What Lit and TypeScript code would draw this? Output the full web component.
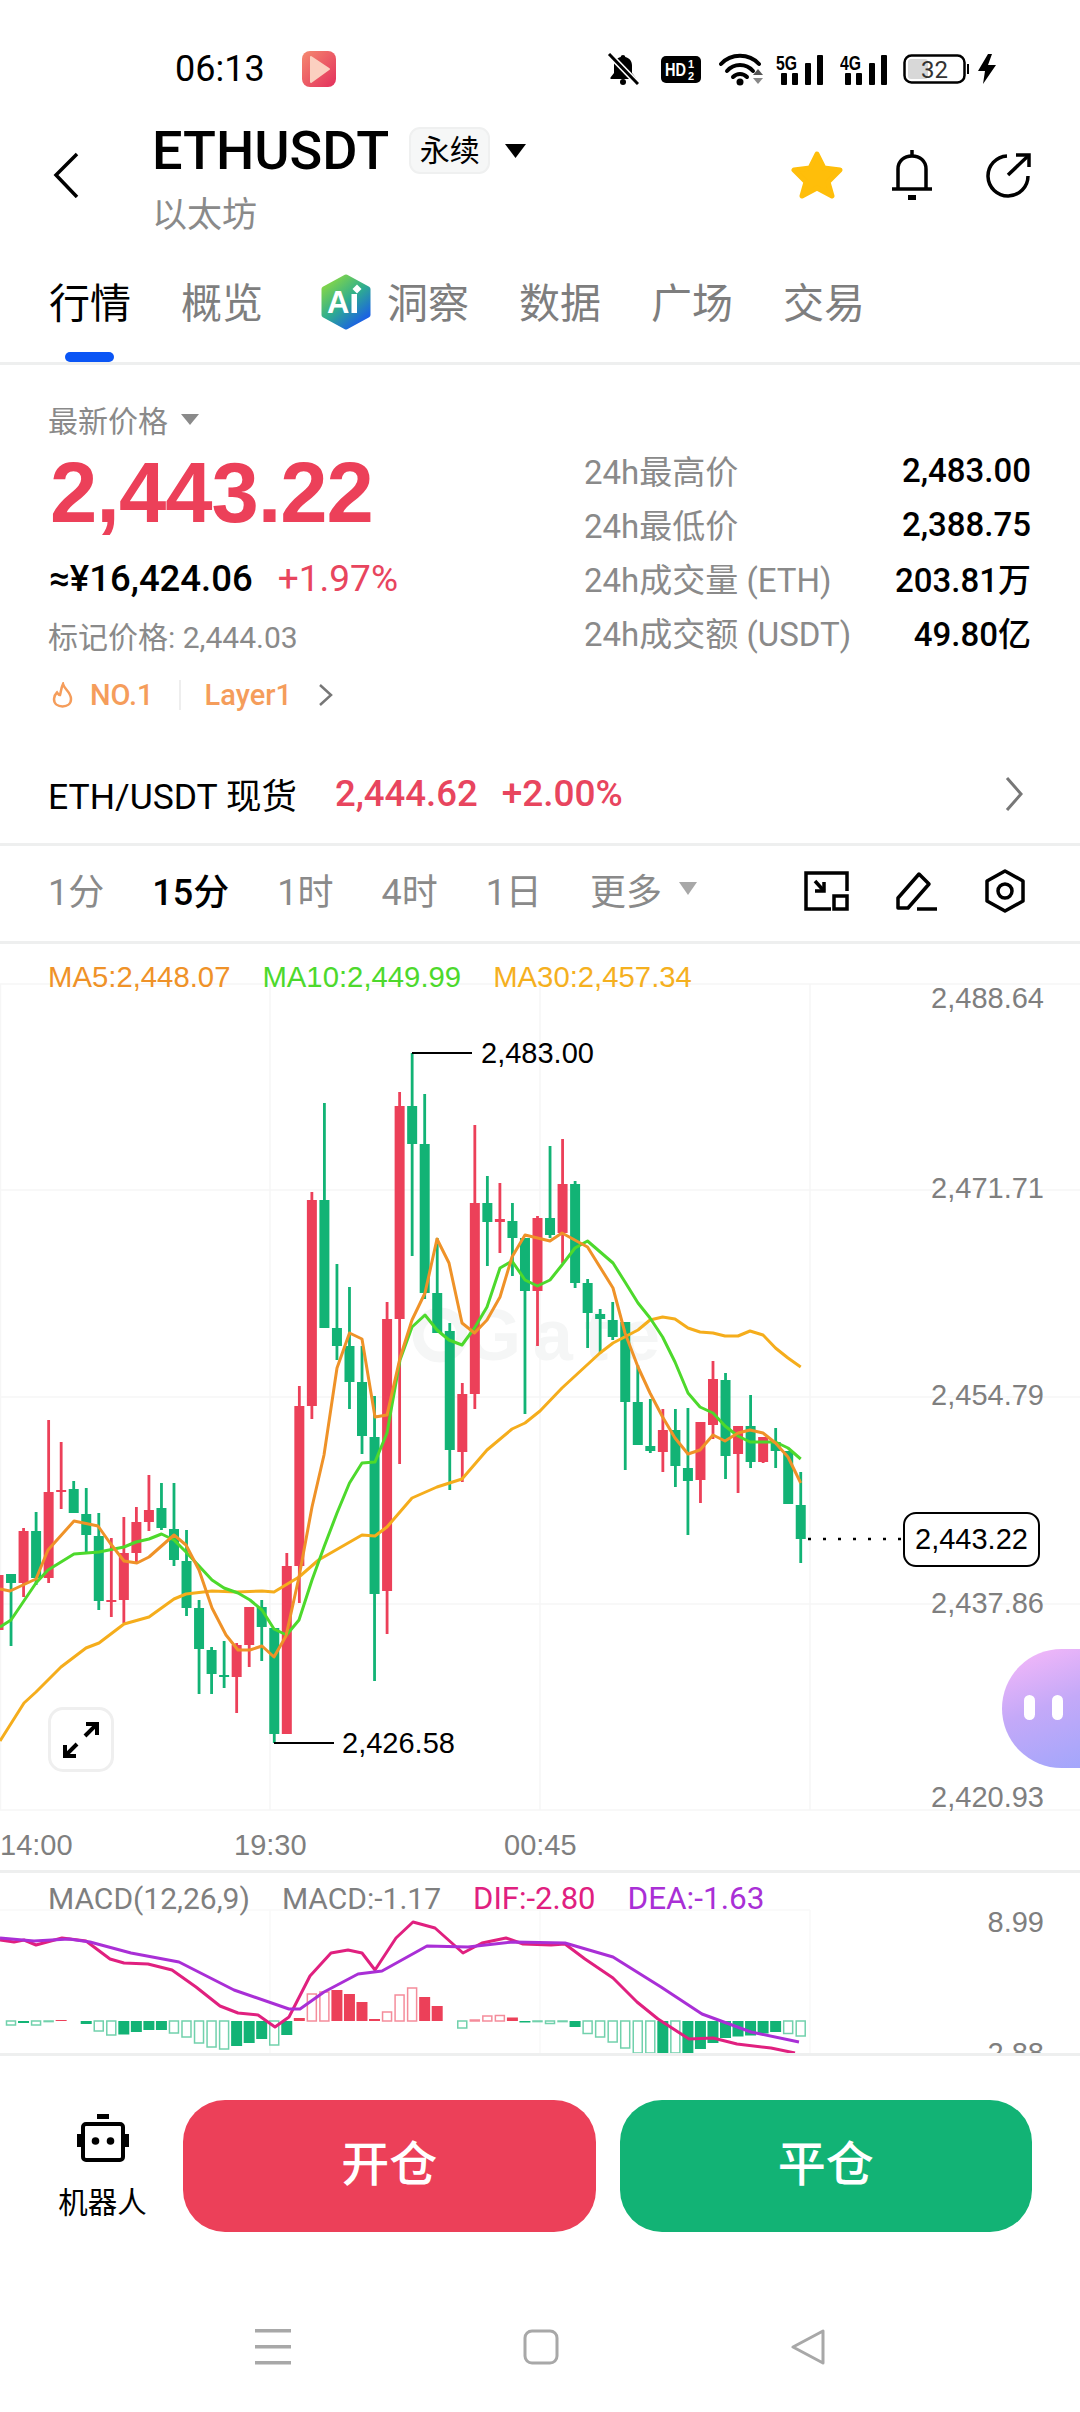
import { LitElement, html, svg, css } from 'lit';
import { customElement } from 'lit/decorators.js';

type Candle = [number, number, number, number, 'r' | 'g'];

const RED = '#ec4059';
const GREEN = '#12b375';

// wick top, body top, body bottom, wick bottom (page y), first candle sits just off the left edge
const candles: Candle[] = [
  [1575, 1575, 1630, 1640, 'r'], [1574, 1574, 1583, 1646, 'g'], [1528, 1531, 1583, 1597, 'r'], [1512, 1531, 1578, 1585, 'g'],
  [1420, 1492, 1578, 1583, 'r'], [1442, 1490, 1492, 1509, 'r'], [1481, 1489, 1513, 1513, 'g'], [1488, 1514, 1535, 1553, 'g'],
  [1513, 1536, 1601, 1610, 'g'], [1538, 1600, 1602, 1617, 'r'], [1517, 1553, 1600, 1623, 'r'], [1507, 1522, 1553, 1562, 'r'],
  [1475, 1510, 1522, 1531, 'r'], [1483, 1508, 1528, 1530, 'g'], [1483, 1529, 1560, 1566, 'g'], [1530, 1561, 1608, 1616, 'g'],
  [1600, 1608, 1649, 1694, 'g'], [1647, 1650, 1674, 1694, 'g'], [1641, 1675, 1677, 1688, 'g'], [1643, 1645, 1677, 1713, 'r'],
  [1607, 1607, 1645, 1667, 'r'], [1600, 1607, 1627, 1661, 'g'], [1628, 1628, 1734, 1743, 'g'], [1553, 1566, 1734, 1734, 'r'],
  [1386, 1406, 1566, 1603, 'r'], [1192, 1200, 1406, 1419, 'r'], [1103, 1200, 1328, 1328, 'g'], [1264, 1328, 1346, 1360, 'g'],
  [1287, 1346, 1382, 1409, 'g'], [1346, 1382, 1436, 1454, 'g'], [1396, 1437, 1594, 1681, 'g'], [1302, 1319, 1591, 1634, 'r'],
  [1092, 1106, 1319, 1464, 'r'], [1053, 1106, 1144, 1256, 'g'], [1094, 1144, 1293, 1299, 'g'], [1238, 1293, 1333, 1333, 'g'],
  [1323, 1331, 1450, 1490, 'g'], [1383, 1394, 1452, 1482, 'r'], [1125, 1203, 1394, 1409, 'r'], [1176, 1203, 1222, 1266, 'g'],
  [1183, 1219, 1222, 1253, 'r'], [1203, 1221, 1238, 1276, 'g'], [1238, 1238, 1291, 1414, 'g'], [1216, 1218, 1291, 1346, 'r'],
  [1146, 1218, 1235, 1238, 'g'], [1139, 1184, 1233, 1263, 'r'], [1181, 1184, 1283, 1288, 'g'], [1279, 1283, 1313, 1348, 'g'],
  [1309, 1314, 1319, 1353, 'g'], [1302, 1320, 1337, 1340, 'g'], [1322, 1322, 1402, 1470, 'g'], [1365, 1402, 1445, 1445, 'g'],
  [1399, 1446, 1451, 1453, 'g'], [1409, 1430, 1452, 1472, 'r'], [1409, 1430, 1466, 1487, 'g'], [1408, 1468, 1481, 1535, 'g'],
  [1422, 1422, 1480, 1503, 'r'], [1361, 1379, 1425, 1439, 'r'], [1373, 1380, 1456, 1479, 'g'], [1426, 1426, 1454, 1493, 'r'],
  [1395, 1426, 1462, 1468, 'g'], [1437, 1437, 1462, 1463, 'r'], [1428, 1442, 1451, 1468, 'g'], [1451, 1451, 1504, 1504, 'g'],
  [1472, 1505, 1539, 1563, 'g'],
];
const candleX = (i: number) => -1.5 + i * 12.535;

const ma5 = '0,1589 10,1591 36,1579 48,1550 74,1521 98,1526 110,1543 124,1561 137,1563 149,1557 174,1535 186,1545 199,1570 212,1608 226,1635 238,1650 250,1650 262,1646 274,1657 286,1636 299,1577 312,1507 324,1455 337,1368 349.5,1333 362,1339 375,1417 387,1415 400,1358 412,1320 425,1293 437,1239 449,1263 462,1323 474.5,1333 487,1320 500,1297 512,1257 525,1235 537.5,1238 550,1241 562,1233 587.5,1247 613,1288 625,1333 638,1367 650,1393 662.6,1417 675,1438 688,1454 700,1450 713,1435 725,1441 738,1433 750,1430 763,1433 775.5,1443 788,1457 800.7,1483';
const ma10 = '0,1627 11,1620 36,1583 48,1570 74,1554 99,1552 124,1547 136,1542 149,1539 161.5,1534 174,1540 186,1552 199,1566 212,1580 224,1588 238,1593 250,1600 262,1610 274,1629 286.5,1635 299,1620 312,1580 324,1547 337,1513 349.5,1483 362,1463 375,1462 387,1433 400,1360 412,1327 425,1315 437,1330 449,1340 462,1345 474.5,1328 487,1307 500,1268 512,1261 525,1280 537.5,1286 550,1280 562,1265 575,1248 587.5,1241 613,1263 625,1282 638,1303 650,1318 662.6,1337 675,1362 688,1393 700,1407 713,1413 725,1426 738,1436 750,1442 763,1442 775.5,1442 788,1448 800.7,1459';
const ma30 = '0,1741 24,1703 36,1692 61,1667 86,1648 99,1643 124,1624 149,1617 174,1599 186,1594 212,1591 237,1592 262,1591 274,1592 299,1577 318.5,1560 362,1535 375,1536 387,1527 412,1498 437,1487 462,1479 487,1450 512,1429 525,1423 540,1411 562,1388 600,1353 613,1343 638,1330 650,1320 662.6,1317 675,1319 688,1328 700,1332 713,1333 725,1336 738,1336 750,1331 763,1335 775.5,1348 788,1358 800.7,1367';

// panel-local y is measured from the top of the macd panel (page y 1873)
const dif = '0,-1 14,1 24,-1 36,4 62,-3 86,0 110,18 124,22 148,23 172,29 196,46 220,65 238,72 258,74 275,86 289,76 310,35 331,12 348,9 362,12 375,29 396,-3 413,-19 435,-13 463,12 482,2 506,-3 523,3 551,4 565,3 585,18 613,37 637,61 658,78 689,98 713,97 737,103 771,107 795,112';
const dea = '0,-3 34,0 69,-2 90,1 131,12 179,21 234,49 289,68 300,68 324,51 358,33 382,30 427,5 468,6 513,1 565,2 613,16 661,46 702,73 751,91 799,101';
// histogram: signed height in px, last flag marks hollow bars
const bars: [number, boolean][] = [
  [4, true], [2, false], [4, true], [0.6, true], [-1, false], [0, false], [3, false], [10, true], [14, true], [13.5, false],
  [11, false], [9, false], [9, false], [12, true], [16, true], [22, true], [26, true], [28, true], [25, false], [22, false],
  [18, false], [24, true], [14, false], [-3, false], [-27, true], [-29, true], [-31, false], [-27, false], [-19, false], [-2, false],
  [-9, true], [-26, true], [-33, true], [-24, false], [-15, false], [0, false], [7, true], [-1, true], [-5, true], [-5.500, true],
  [-3.500, false], [1.500, false], [0.600, true], [2.500, true], [0.600, true], [6, false], [12.500, true], [16, true], [21, true], [27, true],
  [32, true], [32, true], [32, false], [32, true], [32, false], [28, false], [22, false], [17, false], [15.500, false], [14.500, false],
  [12.500, false], [11, false], [12.500, true], [15, true],
];
const barX = (i: number) => 11 + i * 12.535;

const tabs = ['概览', '洞察', '数据', '广场', '交易'];
const stats = [
  ['24h最高价', '2,483.00'],
  ['24h最低价', '2,388.75'],
  ['24h成交量 (ETH)', '203.81万'],
  ['24h成交额 (USDT)', '49.80亿'],
];
const periods = ['1分', '15分', '1时', '4时', '1日'];
const yLabels: [string, number][] = [['2,488.64', 1008], ['2,471.71', 1198], ['2,454.79', 1405], ['2,437.86', 1613], ['2,420.93', 1807]];

const signal = (label: string) => html`
  <svg width="48" height="32" viewBox="0 0 48 32">
    <text class="net" x="0" y="17" textLength="21" lengthAdjust="spacingAndGlyphs">${label}</text>
    <rect x="5" y="20" width="6" height="12" rx="1"/>
    <rect x="16" y="20" width="6" height="12" rx="1"/>
    <rect x="29" y="10" width="6" height="22" rx="1"/>
    <rect x="41" y="2" width="6" height="30" rx="1"/>
  </svg>`;

@customElement('app-root')
export class AppRoot extends LitElement {
  static styles = css`
    :host {
      background: #fff;
      color: #000;
      display: block;
      font-family: Roboto, "Noto Sans CJK SC", sans-serif;
      height: 2412px;
      overflow: hidden;
      width: 1080px;
    }

    .status { align-items: center; display: flex; height: 38px; padding: 50px 83px 39px 175px; }
    .time { font-size: 36px; line-height: 38px; }
    .app-badge { margin-left: 37px; }
    .status-icons { align-items: center; display: flex; margin-left: auto; }
    .status-icons svg { display: block; }
    .net { font: bold 20px "Liberation Sans", sans-serif; }

    .header { display: flex; height: 125px; }
    .back { margin: 25px 0 0 53px; }
    .title-block { margin-left: 73px; }
    .title-row { align-items: center; display: flex; height: 47px; }
    .symbol { font-size: 54px; font-weight: 500; line-height: 47px; }
    .tag {
      background: #f6f7f7;
      border: 2px solid #eff0f0;
      border-radius: 11px;
      box-sizing: border-box;
      font-size: 30px;
      height: 47px;
      line-height: 43px;
      margin-left: 20px;
      text-align: center;
      width: 81px;
    }
    .tag-arrow { margin-left: 15px; }
    .name { color: #8a8a8a; font-size: 35px; line-height: 42px; margin-top: 21px; }
    .actions { align-items: center; display: flex; height: 96px; margin-left: auto; padding: 0 49px 0 0; }
    .actions svg { display: block; }
    .star { margin-right: 48px; }
    .bell { margin-right: 53px; }

    .tabs {
      border-bottom: 3px solid #eeefef;
      display: flex;
      gap: 50px;
      height: 110px;
      padding-left: 49px;
      position: relative;
    }
    .tab { color: #7e7e7e; font-size: 41px; line-height: 104px; position: relative; }
    .tab.on { color: #000; }
    .tab.on::after {
      background: #0a55f5;
      border-radius: 5px;
      bottom: 0;
      content: "";
      height: 10px;
      left: 16px;
      position: absolute;
      width: 49px;
    }
    .tab-ai { align-items: center; display: flex; gap: 16px; height: 104px; margin-left: 8px; }
    .ai-logo { margin-top: -5px; }

    .price { display: flex; height: 379px; }
    .price-left { box-sizing: border-box; padding: 34px 0 0 48px; width: 584px; }
    .last-label { align-items: center; color: #8a8a8a; display: flex; font-size: 30px; gap: 13px; height: 40px; }
    .last-price {
      color: #ec4059;
      font-family: "Liberation Sans", sans-serif;
      font-size: 85px;
      font-weight: bold;
      height: 108px;
      letter-spacing: -1px;
      line-height: 108px;
      margin-left: 2px;
    }
    .fiat { align-items: center; display: flex; font-size: 36.5px; font-weight: 500; gap: 25px; height: 62px; margin-left: 1px; }
    .fiat .pct { color: #e8455e; font-size: 37px; font-weight: 400; }
    .mark { color: #8a8a8a; font-size: 30px; height: 58px; line-height: 58px; }
    .labels { align-items: center; color: #f59d5b; display: flex; font-size: 29px; font-weight: 500; height: 56px; }
    .labels .flame { margin: 0 17px 0 4px; }
    .labels .sep { background: #eeeeee; height: 30px; margin: 0 24px 0 25px; width: 2px; }
    .labels .more { margin-left: 26px; }
    .price-right { flex: 1; padding: 78px 49px 0 0; }
    .stat { align-items: center; display: flex; height: 54px; justify-content: space-between; }
    .stat span:first-child { color: #8a8a8a; font-size: 33px; }
    .stat span:last-child { font-size: 33px; font-weight: 500; }

    .spot { align-items: center; border-bottom: 3px solid #eeefef; display: flex; font-size: 35.5px; height: 99px; padding: 0 57px 0 48px; }
    .spot .px { color: #e8455e; font-size: 36.5px; font-weight: 500; margin-left: 38px; }
    .spot .pc { color: #e8455e; font-size: 37px; font-weight: 500; margin-left: 24px; }
    .spot svg { margin-left: auto; }

    .periods { align-items: center; border-bottom: 3px solid #eeefef; display: flex; height: 85px; padding: 0 55px 10px 48px; }
    .period { color: #8a8a8a; font-size: 36px; margin-right: 48px; }
    .period.on { color: #000; font-weight: 500; }
    .more-btn { align-items: center; color: #8a8a8a; display: flex; font-size: 36px; gap: 17px; }
    .tools { align-items: center; display: flex; gap: 47px; margin-left: auto; margin-top: 5px; }
    .tools svg { display: block; }

    .chart { border-bottom: 3px solid #eeefef; height: 926px; position: relative; }
    .chart svg.plot { display: block; }
    .grid { stroke: #f6f6f6; stroke-width: 1.5; }
    .axis { fill: #7f7f7f; font: 29px "Liberation Sans", sans-serif; }
    .mark-text { fill: #000; font: 29px "Liberation Sans", sans-serif; }
    .legend { display: flex; font: 29.3px "Liberation Sans", sans-serif; gap: 32px; left: 48px; position: absolute; top: 16px; }
    .now {
      background: #fff;
      border: 2.500px solid #000;
      border-radius: 13px;
      box-sizing: border-box;
      font: 29px/50px "Liberation Sans", sans-serif;
      height: 55px;
      left: 903px;
      position: absolute;
      text-align: center;
      top: 568px;
      width: 137px;
    }
    .expand {
      align-items: center;
      background: #fff;
      border: 3px solid #efefef;
      border-radius: 15px;
      box-sizing: border-box;
      display: flex;
      height: 65px;
      justify-content: center;
      left: 48px;
      position: absolute;
      top: 763px;
      width: 66px;
    }
    .bubble {
      background: linear-gradient(160deg, #f9b9f9 0%, #c4a9f8 50%, #a3a6fb 100%);
      border-radius: 60px 0 0 60px;
      height: 119px;
      left: 1002px;
      position: absolute;
      top: 705px;
      width: 78px;
    }
    .bubble i { background: #fff; border-radius: 6px; height: 25px; position: absolute; top: 46px; width: 11px; }
    .bubble i:first-child { left: 22px; }
    .bubble i:last-child { left: 50px; }

    .macd { border-bottom: 3px solid #eeefef; height: 180px; position: relative; }
    .macd svg { display: block; }
    .macd .grid { stroke: #f9f9f9; }
    .macd-legend { color: #7f7f7f; display: flex; font-size: 30px; left: 48px; line-height: 36px; position: absolute; top: 8px; }
    .macd-legend span { margin-right: 32px; }
    .macd-legend .dif { color: #e0207f; font-size: 31px; }
    .macd-legend .dea { color: #a92fd6; font-size: 31.5px; }

    .bottom { display: flex; padding: 44px 48px 0 22px; }
    .bot { align-items: center; display: flex; flex-direction: column; font-size: 29.5px; width: 161px; }
    .bot svg { display: block; margin: 14px 0 17px; }
    .trade { border-radius: 42px; color: #fff; flex: 1; font-size: 48px; font-weight: 500; height: 132px; line-height: 130px; text-align: center; }
    .trade.open { background: #ec4059; margin-right: 24px; }
    .trade.close { background: #12b375; }

    .nav { align-items: center; display: flex; gap: 232px; justify-content: center; margin-top: 97px; }
    .nav svg { display: block; }
  `;

  render() {
    return html`
      <div class="status">
        <span class="time">06:13</span>
        <svg class="app-badge" width="34" height="36" viewBox="0 0 34 36">
          <defs><linearGradient id="rb" x1="0" y1="0" x2="1" y2="1"><stop offset="0" stop-color="#f58a70"/><stop offset="1" stop-color="#e32f5c"/></linearGradient></defs>
          <rect width="34" height="36" rx="8" fill="url(#rb)"/>
          <path d="M9 6 L27 18 L9 31 Z" fill="#fbd0c0" stroke="#fbd0c0" stroke-width="2" stroke-linejoin="round"/>
        </svg>
        <div class="status-icons">
          <svg width="32" height="32" viewBox="0 0 32 32" style="margin-right:22px">
            <path d="M16 2c1.300 0 2.200.8 2.300 2 4.300 1 6.700 4.200 6.700 8.500V20l3.500 4.500V26H3.500v-1.500L7 20v-7.500C7 8.200 9.400 5 13.700 4c.1-1.200 1-2 2.300-2z"/>
            <circle cx="16" cy="29" r="3"/>
            <line x1="2" y1="1" x2="31" y2="31" stroke="#fff" stroke-width="6"/>
            <line x1="2" y1="1" x2="31" y2="31" stroke="#000" stroke-width="3"/>
          </svg>
          <svg width="40" height="27" viewBox="0 0 40 27" style="margin-right:18px">
            <rect width="40" height="27" rx="5"/>
            <text x="4" y="20" fill="#fff" font-family="Liberation Sans" font-weight="bold" font-size="18" textLength="21" lengthAdjust="spacingAndGlyphs">HD</text>
            <text x="27" y="12" fill="#fff" font-family="Liberation Sans" font-weight="bold" font-size="11">1</text>
            <text x="27" y="24" fill="#fff" font-family="Liberation Sans" font-weight="bold" font-size="11">2</text>
          </svg>
          <svg width="45" height="33" viewBox="0 0 45 33" style="margin-right:12px">
            <g fill="none" stroke="#000" stroke-width="4" stroke-linecap="round">
              <path d="M2 11 C12 0 30 0 40 11"/>
              <path d="M8 18 C15 10 27 10 34 18"/>
              <path d="M14 24 C18 20 24 20 28 24"/>
            </g>
            <circle cx="21" cy="29" r="3.500"/>
            <path d="M34 22 L39 16 L44 22 Z" fill="#555"/>
            <path d="M34 25 L44 25 L39 31 Z" fill="#888"/>
          </svg>
          <span style="margin-right:16px">${signal('5G')}</span>
          <span style="margin-right:15px">${signal('4G')}</span>
          <svg width="66" height="30" viewBox="0 0 66 30" style="margin-right:8px">
            <rect x="1.500" y="1.500" width="60" height="27" rx="7" fill="#fff" stroke="#000" stroke-width="2.500"/>
            <rect x="5" y="5" width="20" height="20" rx="3" fill="#d8d8d8"/>
            <text x="18" y="24" font-family="Roboto" font-size="24" fill="#333">32</text>
            <rect x="64" y="10" width="2" height="10" fill="#000"/>
          </svg>
          <svg width="20" height="30" viewBox="0 0 20 30"><path d="M11 0 L1 17 H8 L6 30 L19 11 H11 L15 0 Z"/></svg>
        </div>
      </div>

      <div class="header">
        <svg class="back" width="26" height="46" viewBox="0 0 26 46" fill="none" stroke="#000" stroke-width="3.500"><path d="M24 2 L3 23 L24 45"/></svg>
        <div class="title-block">
          <div class="title-row">
            <span class="symbol">ETHUSDT</span>
            <span class="tag">永续</span>
            <svg class="tag-arrow" width="21" height="14" viewBox="0 0 21 14"><path d="M0 0 H21 L10.500 14 Z"/></svg>
          </div>
          <div class="name">以太坊</div>
        </div>
        <div class="actions">
          <svg class="star" width="52" height="48" viewBox="0 0 52 48"><path d="M26 3 L33 17 L49 19 L37 31 L41 45 L26 37 L11 45 L15 31 L3 19 L19 17 Z" fill="#ffbe0a" stroke="#ffbe0a" stroke-width="5" stroke-linejoin="round"/></svg>
          <svg class="bell" width="42" height="50" viewBox="0 0 42 50" fill="none" stroke="#000" stroke-width="3.500">
            <path d="M7 38 V19 C7 11 13 6 21 6 C29 6 35 11 35 19 V38"/>
            <path d="M1 39 H41"/>
            <path d="M21 0 V6"/>
            <rect x="17" y="45" width="8" height="5" fill="#000" stroke="none"/>
          </svg>
          <svg width="45" height="46" viewBox="0 0 45 46" fill="none" stroke="#000" stroke-width="3.500">
            <path d="M21 4 A20 20 0 1 0 42 24"/>
            <path d="M22 23 L42 4"/>
            <path d="M30 3 H43 V15"/>
          </svg>
        </div>
      </div>

      <div class="tabs">
        <span class="tab on">行情</span>
        ${tabs.map((t, i) => i === 1
          ? html`<span class="tab tab-ai">
              <svg class="ai-logo" width="50" height="56" viewBox="0 0 50 56">
                <defs><linearGradient id="ai" x1="0.15" y1="0.05" x2="0.8" y2="0.95"><stop offset="0" stop-color="#84d648"/><stop offset="0.5" stop-color="#2fae8e"/><stop offset="1" stop-color="#1a5fe6"/></linearGradient></defs>
                <path d="M25 3 L47 15 V41 L25 53 L3 41 V15 Z" fill="url(#ai)" stroke="url(#ai)" stroke-width="5" stroke-linejoin="round"/>
                <text x="6" y="39" fill="#fff" font-family="Liberation Sans" font-weight="bold" font-size="31">A</text>
                <rect x="30.500" y="20" width="5.500" height="19" fill="#fff"/>
                <path d="M36 10.500 L40.500 15 L36 19.500 L31.500 15 Z" fill="#fff"/>
              </svg>${t}</span>`
          : html`<span class="tab">${t}</span>`)}
      </div>

      <div class="price">
        <div class="price-left">
          <div class="last-label">最新价格<svg width="18" height="11" viewBox="0 0 18 11"><path d="M0 0 H18 L9 11 Z" fill="#8a8a8a"/></svg></div>
          <div class="last-price">2,443.22</div>
          <div class="fiat"><span>≈¥16,424.06</span><span class="pct">+1.97%</span></div>
          <div class="mark">标记价格: 2,444.03</div>
          <div class="labels">
            <svg class="flame" width="21" height="26" viewBox="0 0 21 26" fill="none" stroke="#f59d5b" stroke-width="2.500"><path d="M11 2 C12 7 19 10 19 17 C19 22 15 24.500 10.500 24.500 C6 24.500 2 22 2 17 C2 14 3.500 12 5 10.500 C6 12 7 13 8 13 C9 10 9 6 11 2 Z"/></svg>
            <span>NO.1</span>
            <span class="sep"></span>
            <span>Layer1</span>
            <svg class="more" width="15" height="22" viewBox="0 0 15 22" fill="none" stroke="#777" stroke-width="2.500"><path d="M2 1 L13 11 L2 21"/></svg>
          </div>
        </div>
        <div class="price-right">
          ${stats.map(([k, v]) => html`<div class="stat"><span>${k}</span><span>${v}</span></div>`)}
        </div>
      </div>

      <div class="spot">
        <span>ETH/USDT 现货</span>
        <span class="px">2,444.62</span>
        <span class="pc">+2.00%</span>
        <svg width="18" height="34" viewBox="0 0 18 34" fill="none" stroke="#777" stroke-width="3"><path d="M2 1 L16 17 L2 33"/></svg>
      </div>

      <div class="periods">
        ${periods.map(p => html`<span class="period ${p === '15分' ? 'on' : ''}">${p}</span>`)}
        <span class="more-btn">更多<svg width="18" height="13" viewBox="0 0 18 13"><path d="M0 0 H18 L9 13 Z" fill="#a8a8a8"/></svg></span>
        <div class="tools">
          <svg width="45" height="40" viewBox="0 0 45 40" fill="none" stroke="#000" stroke-width="3.500">
            <path d="M27 38 H2 V2 H43 V20"/>
            <rect x="30" y="25" width="13" height="13"/>
            <path d="M11 10 L20 20"/>
            <path d="M20 11 V20 H11"/>
          </svg>
          <svg width="42" height="40" viewBox="0 0 42 40" fill="none" stroke="#000" stroke-width="3.500" stroke-linejoin="round">
            <path d="M2 37 V27 L23 3 L33 13 L12 37 Z"/>
            <path d="M21 38 H41"/>
          </svg>
          <svg width="40" height="44" viewBox="0 0 40 44" fill="none" stroke="#000" stroke-width="3.500" stroke-linejoin="round">
            <path d="M20 2 L38 12 V32 L20 42 L2 32 V12 Z"/>
            <circle cx="20" cy="22" r="7"/>
          </svg>
        </div>
      </div>

      <div class="chart">
        <svg class="plot" width="1080" height="926" viewBox="0 944 1080 926">
          ${[984, 1190, 1397, 1604, 1810].map(y => svg`<line class="grid" x1="0" x2="1080" y1=${y} y2=${y}/>`)}
          ${[0.5, 270, 540, 810].map(x => svg`<line class="grid" x1=${x} x2=${x} y1="984" y2="1810"/>`)}
          <circle cx="440" cy="1335" r="22" fill="none" stroke="#f5f6f6" stroke-width="11"/>
          <text x="465" y="1360" font-family="Liberation Sans" font-weight="bold" font-size="72" fill="#f5f6f6" textLength="195">Gate</text>
          ${candles.map((c, i) => {
            const x = candleX(i);
            const color = c[4] === 'r' ? RED : GREEN;
            return svg`
              <rect x=${x - 1.4} y=${c[0]} width="2.800" height=${c[3] - c[0]} fill=${color}/>
              <rect x=${x - 5} y=${c[1]} width="10" height=${c[2] - c[1]} fill=${color}/>`;
          })}
          <polyline points=${ma30} fill="none" stroke="#f5ad1c" stroke-width="3" stroke-linejoin="round"/>
          <polyline points=${ma10} fill="none" stroke="#4dd92c" stroke-width="3" stroke-linejoin="round"/>
          <polyline points=${ma5} fill="none" stroke="#ef9228" stroke-width="3" stroke-linejoin="round"/>
          <line x1="412" x2="472" y1="1053" y2="1053" stroke="#000" stroke-width="2"/>
          <text class="mark-text" x="481" y="1063">2,483.00</text>
          <line x1="274" x2="334" y1="1743" y2="1743" stroke="#000" stroke-width="2"/>
          <text class="mark-text" x="342" y="1753">2,426.58</text>
          <line x1="808" x2="903" y1="1539" y2="1539" stroke="#000" stroke-width="2.500" stroke-dasharray="3 12"/>
          ${yLabels.map(([t, y]) => svg`<text class="axis" x="1044" y=${y} text-anchor="end">${t}</text>`)}
          <text class="axis" x="0" y="1855">14:00</text>
          <text class="axis" x="234" y="1855">19:30</text>
          <text class="axis" x="504" y="1855">00:45</text>
        </svg>
        <div class="legend">
          <span style="color:#ef9228">MA5:2,448.07</span>
          <span style="color:#4dd92c">MA10:2,449.99</span>
          <span style="color:#f5b01e">MA30:2,457.34</span>
        </div>
        <div class="now">2,443.22</div>
        <div class="expand">
          <svg width="36" height="36" viewBox="0 0 36 36" fill="none" stroke="#000" stroke-width="4">
            <path d="M22 14 L35 1"/><path d="M23 2 H34 V13"/>
            <path d="M14 22 L1 35"/><path d="M2 23 V34 H13"/>
          </svg>
        </div>
        <div class="bubble"><i></i><i></i></div>
      </div>

      <div class="macd">
        <svg width="1080" height="180" viewBox="0 0 1080 180">
          <line class="grid" x1="0" x2="810" y1="37" y2="37"/>
          ${[270, 540, 810].map(x => svg`<line class="grid" x1=${x} x2=${x} y1="37" y2="180"/>`)}
          ${bars.map(([h, hollow], i) => {
            if (h === 0) return svg``;
            const color = h > 0 ? GREEN : RED;
            const y = h > 0 ? 148 : 148 + h;
            const tall = Math.abs(h);
            return hollow
              ? svg`<rect x=${barX(i) - 4.5} y=${y} width="9" height=${tall} fill="#fff" stroke=${color} stroke-opacity="0.6" stroke-width="1.500"/>`
              : svg`<rect x=${barX(i) - 5.5} y=${y} width="11" height=${tall} fill=${color}/>`;
          })}
          <polyline transform="translate(0 68)" points=${dif} fill="none" stroke="#e0207f" stroke-width="3" stroke-linejoin="round"/>
          <polyline transform="translate(0 68)" points=${dea} fill="none" stroke="#a92fd6" stroke-width="3" stroke-linejoin="round"/>
          <text class="axis" x="1044" y="59" text-anchor="end">8.99</text>
          <text class="axis" x="1044" y="190" text-anchor="end">2.88</text>
        </svg>
        <div class="macd-legend">
          <span>MACD(12,26,9)</span>
          <span>MACD:-1.17</span>
          <span class="dif">DIF:-2.80</span>
          <span class="dea">DEA:-1.63</span>
        </div>
      </div>

      <div class="bottom">
        <div class="bot">
          <svg width="52" height="48" viewBox="0 0 52 48">
            <rect x="20" y="0" width="12" height="5"/>
            <rect x="6" y="10" width="40" height="36" rx="3" fill="none" stroke="#000" stroke-width="4"/>
            <rect x="0" y="20" width="4" height="13"/>
            <rect x="48" y="20" width="4" height="13"/>
            <circle cx="18.500" cy="27" r="3.800"/>
            <circle cx="33.500" cy="27" r="3.800"/>
          </svg>
          <span>机器人</span>
        </div>
        <div class="trade open">开仓</div>
        <div class="trade close">平仓</div>
      </div>

      <div class="nav">
        <svg width="36" height="36" viewBox="0 0 36 36" fill="#a8a8a8"><rect y="0" width="36" height="3.500"/><rect y="16" width="36" height="3.500"/><rect y="32" width="36" height="3.500"/></svg>
        <svg width="36" height="36" viewBox="0 0 36 36" fill="none" stroke="#a8a8a8" stroke-width="3"><rect x="2" y="2" width="32" height="32" rx="7"/></svg>
        <svg width="34" height="36" viewBox="0 0 34 36" fill="none" stroke="#a8a8a8" stroke-width="3" stroke-linejoin="round"><path d="M32 2 V34 L2 18 Z"/></svg>
      </div>
    `;
  }
}
